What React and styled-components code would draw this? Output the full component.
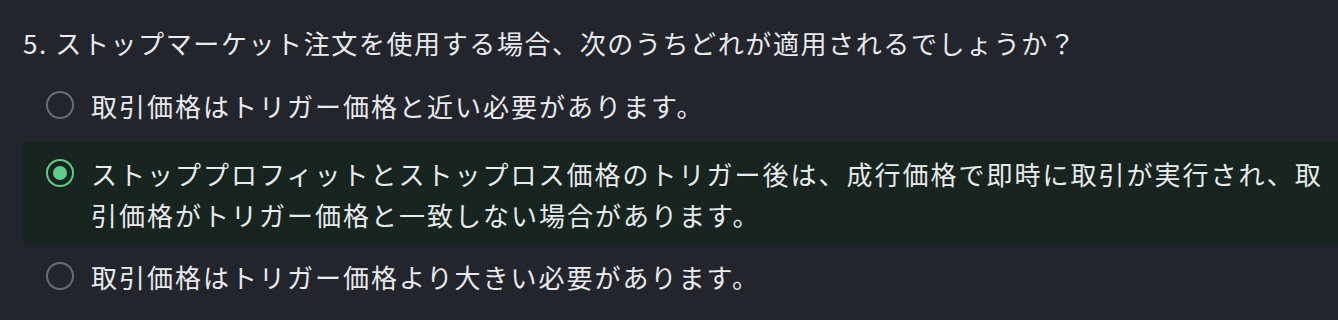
import React from 'react'
import styled, { createGlobalStyle } from 'styled-components'

const GlobalStyle = createGlobalStyle`
  html, body {
    margin: 0;
    padding: 0;
    background: #23252d;
    overflow: hidden;
  }
  body {
    font-family: "Noto Sans CJK JP", "Noto Sans", sans-serif;
    color: #e9eaec;
  }
`

const Wrapper = styled.section`
  padding: 22px 0 0 22px;
  width: 1340px;
`

const Title = styled.h2`
  margin: 0 0 11px 1px;
  font-size: 26px;
  font-weight: 400;
  line-height: 41px;
  letter-spacing: 1.6px;
`

const Options = styled.div`
  display: flex;
  flex-direction: column;
`

const Option = styled.label`
  display: flex;
  align-items: flex-start;
  gap: 17px;
  padding: 10.5px 24px;
  margin-top: ${({ $active }) => ($active ? '6px' : '0')};
  border-radius: 8px;
  background: ${({ $active }) => ($active ? '#17241f' : 'transparent')};
  cursor: pointer;
`

const Radio = styled.span`
  flex-shrink: 0;
  box-sizing: border-box;
  width: 28px;
  height: 28px;
  margin-top: 6.5px;
  border-radius: 50%;
  border: 2px solid ${({ $active }) => ($active ? '#5ccd84' : '#6a6c73')};
  display: flex;
  align-items: center;
  justify-content: center;

  &::after {
    content: '';
    display: ${({ $active }) => ($active ? 'block' : 'none')};
    width: 14px;
    height: 14px;
    border-radius: 50%;
    background: #5ccd84;
  }
`

const Text = styled.span`
  font-size: 26px;
  line-height: 41px;
  letter-spacing: 2px;
`

const answers = [
  '取引価格はトリガー価格と近い必要があります。',
  'ストッププロフィットとストップロス価格のトリガー後は、成行価格で即時に取引が実行され、取引価格がトリガー価格と一致しない場合があります。',
  '取引価格はトリガー価格より大きい必要があります。',
]

const App = () => {
  const selected = 1
  return (
    <>
      <GlobalStyle />
      <Wrapper>
        <Title>5. ストップマーケット注文を使用する場合、次のうちどれが適用されるでしょうか？</Title>
        <Options>
          {answers.map((a, i) => (
            <Option key={i} $active={i === selected}>
              <Radio $active={i === selected} />
              <Text>{a}</Text>
            </Option>
          ))}
        </Options>
      </Wrapper>
    </>
  )
}

export default App
